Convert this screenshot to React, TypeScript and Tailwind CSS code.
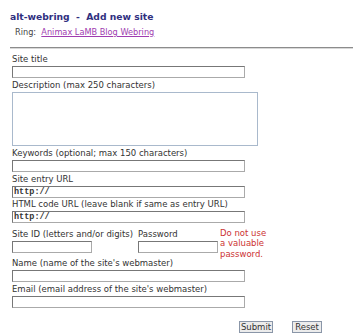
const inputCls =
  'h-[12px] border border-t-[#777] border-l-[#777] border-b-[#aaa] border-r-[#aaa] bg-white px-[1px] py-0 outline-none';

const Field = ({ label, value, labelH }: { label: string; value?: string; labelH: string }) => (
  <div className="flex flex-col">
    <label className={`${labelH} flex items-end whitespace-nowrap pb-[1px] text-[8.5px] leading-[11px] text-[#333]`}>
      {label}
    </label>
    <input
      type="text"
      defaultValue={value}
      className={`${inputCls} w-[233px] font-['Liberation_Mono',monospace] text-[8.5px] font-bold leading-[10px] text-[#333]`}
    />
  </div>
);

const App = () => {
  return (
    <div className="h-[335px] w-[353px] overflow-hidden bg-white font-['DejaVu_Sans',Verdana,sans-serif]">
      <div className="pl-[10px] pt-[10px]">
        <h1 className="text-[9.2px] font-bold leading-[13px] text-[#30307f]">alt-webring&nbsp; - &nbsp;Add new site</h1>
        <p className="mt-[3px] pl-[5px] text-[8.2px] leading-[12px] text-[#444]">
          Ring:&nbsp;&nbsp;
          <a href="#" className="text-[#a03cb0] underline">
            Animax LaMB Blog Webring
          </a>
        </p>
        <div className="mt-[9px] h-[2px] border-t border-b border-t-[#8c8c8c] border-b-[#d8d8d8]" />
      </div>

      <form className="flex flex-col pl-[12px] pt-[4px]">
        <Field label="Site title" labelH="h-[13px]" />
        <div className="flex flex-col">
          <label className="flex h-[14px] items-end pb-[1px] text-[8.5px] leading-[11px] text-[#333]">
            Description (max 250 characters)
          </label>
          <textarea className="h-[54px] w-[246px] resize-none border border-[#a9b9cc] bg-white outline-none" />
        </div>
        <Field label="Keywords (optional; max 150 characters)" labelH="h-[14px]" />
        <Field label="Site entry URL" value="http://" labelH="h-[14px]" />
        <Field label="HTML code URL (leave blank if same as entry URL)" value="http://" labelH="h-[13px]" />

        <div className="mt-[5px] flex h-[29px] items-start">
          <div className="flex w-[126px] flex-col">
            <label className="flex h-[13px] items-end whitespace-nowrap pb-[1px] text-[8.5px] leading-[11px] text-[#333]">
              Site ID (letters and/or digits)
            </label>
            <input type="text" className={`${inputCls} w-[80px]`} />
          </div>
          <div className="flex w-[82px] flex-col">
            <label className="flex h-[13px] items-end pb-[1px] text-[8.5px] leading-[11px] text-[#333]">Password</label>
            <input type="password" className={`${inputCls} w-[80px]`} />
          </div>
          <p className="w-[52px] text-[8.5px] leading-[10.3px] text-[#cc3333]">
            Do not use a valuable password.
          </p>
        </div>

        <Field label="Name (name of the site's webmaster)" labelH="h-[13px]" />
        <Field label="Email (email address of the site's webmaster)" labelH="h-[14px]" />

        <div className="mt-[13px] flex w-[310px] justify-end gap-[19px]">
          <button
            type="button"
            className="flex h-[12px] w-[34px] items-center justify-center border border-[#8a96a8] bg-[#ececec] text-[8.5px] leading-[10px] text-[#333]"
          >
            Submit
          </button>
          <button
            type="button"
            className="flex h-[12px] w-[30px] items-center justify-center border border-[#8a96a8] bg-[#ececec] text-[8.5px] leading-[10px] text-[#333]"
          >
            Reset
          </button>
        </div>
      </form>
    </div>
  );
};

export default App;
